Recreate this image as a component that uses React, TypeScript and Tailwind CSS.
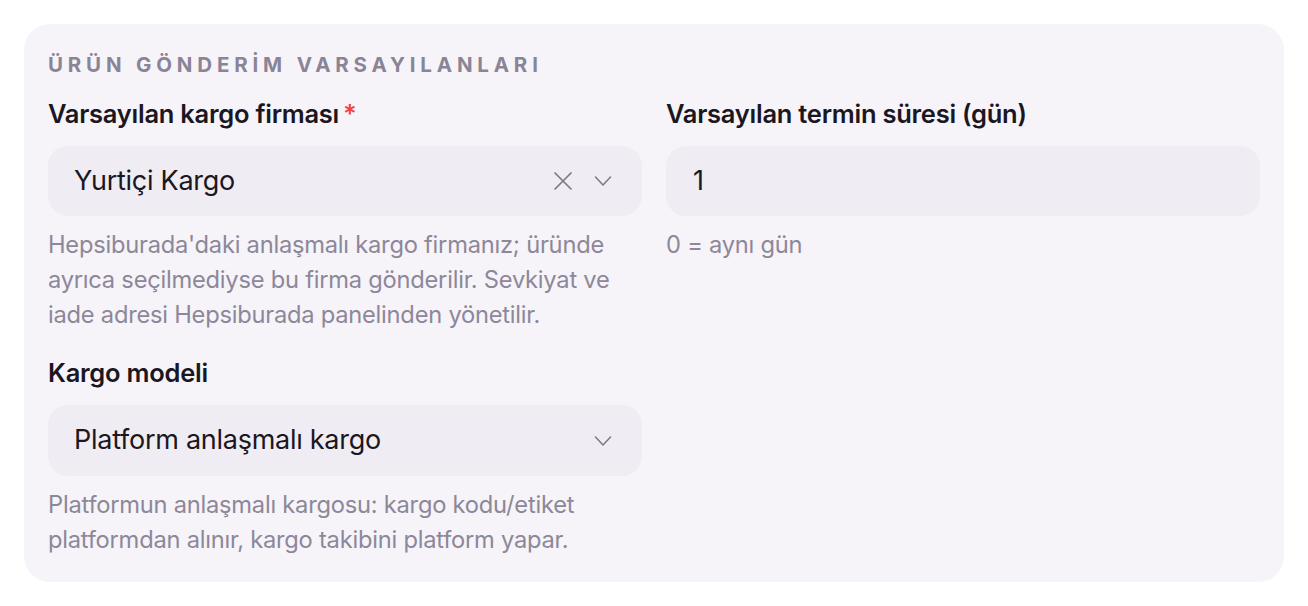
function XIcon() {
  return (
    <svg width="20" height="20" viewBox="0 0 20 20" fill="none" stroke="#7d7789" strokeWidth="1.7" strokeLinecap="round">
      <path d="M2 2 L18 18 M18 2 L2 18" />
    </svg>
  );
}

function Chevron() {
  return (
    <svg width="18" height="12" viewBox="0 0 18 12" fill="none" stroke="#7d7789" strokeWidth="1.5" strokeLinecap="round" strokeLinejoin="round">
      <path d="M1.5 2 L9 10 L16.5 2" />
    </svg>
  );
}

function Field({
  label,
  required,
  children,
  help,
}: {
  label: string;
  required?: boolean;
  children: React.ReactNode;
  help?: string;
}) {
  return (
    <div className="flex flex-col">
      <label className="text-[25.5px] leading-[30px] font-semibold text-[#1b1722] tracking-[-0.01em]">
        {label}
        {required && <span className="text-[#ef4444] ml-1">*</span>}
      </label>
      <div className="mt-[17px]">{children}</div>
      {help && (
        <p className="mt-[11px] text-[23.7px] leading-[35px] text-[#8d879a] tracking-[-0.01em]">{help}</p>
      )}
    </div>
  );
}

export default function App() {
  return (
    <div className="min-h-screen bg-white p-6" style={{ fontFamily: 'Inter, "Noto Sans", sans-serif' }}>
      <div className="bg-[#f6f4f9] rounded-[26px] px-6 pt-[29px] pb-[25px]">
        <h2 className="text-[20.5px] leading-[24px] font-bold tracking-[0.235em] text-[#8a8497] mb-[22px]">
          ÜRÜN GÖNDERİM VARSAYILANLARI
        </h2>
        <div className="grid grid-cols-2 gap-x-6">
          <div className="flex flex-col gap-[26px]">
            <Field
              label="Varsayılan kargo firması"
              required
              help="Hepsiburada'daki anlaşmalı kargo firmanız; üründe ayrıca seçilmediyse bu firma gönderilir. Sevkiyat ve iade adresi Hepsiburada panelinden yönetilir."
            >
              <div className="h-[70px] rounded-[20px] bg-[#efecf3] flex items-center pl-[26px] pr-[30px]">
                <span className="flex-1 text-[27px] text-[#1b1722] tracking-[-0.01em]">Yurtiçi Kargo</span>
                <span className="mr-[21px] flex"><XIcon /></span>
                <Chevron />
              </div>
            </Field>
            <Field
              label="Kargo modeli"
              help="Platformun anlaşmalı kargosu: kargo kodu/etiket platformdan alınır, kargo takibini platform yapar."
            >
              <div className="h-[71px] rounded-[20px] bg-[#efecf3] flex items-center pl-[26px] pr-[30px]">
                <span className="flex-1 text-[27px] text-[#1b1722] tracking-[-0.01em]">Platform anlaşmalı kargo</span>
                <Chevron />
              </div>
            </Field>
          </div>
          <div className="flex flex-col">
            <Field label="Varsayılan termin süresi (gün)" help="0 = aynı gün">
              <div className="h-[70px] rounded-[20px] bg-[#efecf3] flex items-center pl-[27px] pr-[30px]">
                <span className="text-[27px] text-[#1b1722]">1</span>
              </div>
            </Field>
          </div>
        </div>
      </div>
    </div>
  );
}
